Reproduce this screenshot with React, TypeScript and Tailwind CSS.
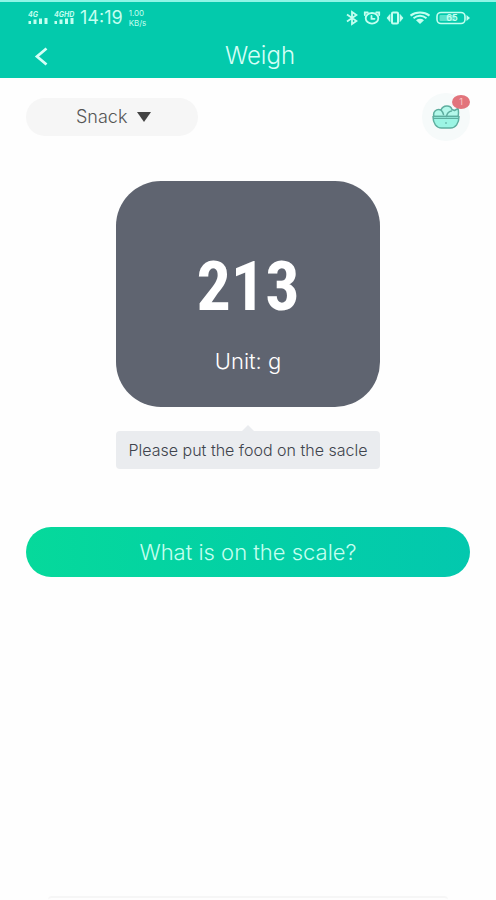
import { useState } from 'react';

function SignalIcon({ label }: { label: string }) {
  return (
    <svg width="22" height="16" viewBox="0 0 22 16" fill="currentColor" aria-label={`${label} signal`}>
      <text x="0" y="7" fontSize="7" fontWeight="700" fontStyle="italic" fontFamily="Inter, sans-serif">{label}</text>
      <rect x="0.500" y="11" width="2.500" height="3" />
      <rect x="5.500" y="9.500" width="3" height="4.500" />
      <rect x="11" y="8.500" width="3" height="5.500" />
      <rect x="16.500" y="8" width="3" height="6" />
    </svg>
  );
}

function BluetoothIcon() {
  return (
    <svg width="12" height="16" viewBox="0 0 12 16" fill="none" stroke="currentColor" strokeWidth="1.8">
      <path d="M1 4.500 10.500 11 6 14V2l4.500 3L1 11.500" />
    </svg>
  );
}

function AlarmIcon() {
  return (
    <svg width="18" height="16" viewBox="0 0 18 16" fill="none" stroke="currentColor" strokeWidth="1.8" strokeLinecap="round">
      <ellipse cx="9" cy="8.300" rx="6.300" ry="5.300" />
      <path d="M8.500 6v2.800h3M1.800 5V2.500h3M16.200 5V2.500h-3" />
    </svg>
  );
}

function VibrateIcon() {
  return (
    <svg width="18" height="16" viewBox="0 0 18 16" fill="none" stroke="currentColor" strokeWidth="2">
      <rect x="6" y="2.500" width="6" height="11" rx="1" />
      <path d="M4 4.500v7L1 8zM14 4.500v7L17 8z" fill="currentColor" strokeWidth="0.8" />
    </svg>
  );
}

function WifiIcon() {
  return (
    <svg width="22" height="16" viewBox="0 0 22 16" fill="none" stroke="currentColor" strokeWidth="2">
      <path d="M1.500 5.600C7 1.500 15 1.500 20.500 5.600M4.500 8.200c4-3 9-3 13 0" />
      <path d="M7 10.200c2.500-1.800 5.500-1.800 8 0L11 14z" fill="currentColor" stroke="none" />
    </svg>
  );
}

function BatteryIcon() {
  return (
    <svg width="34" height="16" viewBox="0 0 34 16" aria-label="Battery 65">
      <rect x="1" y="2.500" width="28" height="11" rx="4" fill="none" stroke="currentColor" strokeWidth="1.600" />
      <rect x="3.500" y="5" width="16" height="6" rx="1" fill="currentColor" opacity="0.45" />
      <path d="M30.500 5 34 8l-3.500 3z" fill="currentColor" />
      <text x="16" y="11.200" fontSize="9" fontWeight="600" fontFamily="Inter, sans-serif" textAnchor="middle" fill="currentColor">65</text>
    </svg>
  );
}

function BowlIcon() {
  return (
    <svg width="28" height="24" viewBox="0 0 28 24" stroke="#5eae9f" strokeWidth="1.500" strokeLinecap="round" strokeLinejoin="round">
      <path d="M2 11.500C.5 7 4 3.500 9 5c2-5 9.500-5.500 11-.5l2.500 1L26 3.500c.8 3 .6 5.500 0 8z" fill="#b4f8ea" />
      <path d="M1 11.500h26c0 7-3.500 11.500-8.500 11.500h-9C4.500 23 1 18.500 1 11.500z" fill="#9cf5e4" />
      <path d="M9 5c1 1 2 2.500 2.500 4.500M14.500 11.500c.5-3 2.500-5 5-5.500" fill="none" />
      <path d="M1.500 13.500h25" fill="none" strokeWidth="1" />
      <path d="M13.800 18h.4" />
    </svg>
  );
}

function StatusBar() {
  return (
    <div className="flex h-8 items-center justify-between px-[26px] text-[#c3fff0]">
      <div className="flex items-center gap-1 pl-0.5">
        <SignalIcon label="4G" />
        <SignalIcon label="4GHD" />
        <span className="text-lg">14:19</span>
        <div className="flex flex-col pl-0.5 text-[8px] leading-[10px]">
          <span>1.00</span>
          <span>KB/s</span>
        </div>
      </div>
      <div className="flex items-center gap-[5px]">
        <BluetoothIcon />
        <AlarmIcon />
        <VibrateIcon />
        <WifiIcon />
        <BatteryIcon />
      </div>
    </div>
  );
}

export default function App() {
  const [meal, setMeal] = useState('Snack');

  return (
    <div className="flex min-h-screen flex-col bg-[#fefefe] font-['Inter',sans-serif]">
      <header className="border-t-2 border-[#8ff5e6] bg-[#03caac]">
        <StatusBar />
        <div className="grid h-11 grid-cols-[1fr_auto_1fr] items-center px-8">
          <button type="button" aria-label="Back" className="w-fit text-[#d5fff7]">
            <svg width="18" height="20" viewBox="0 0 18 20" fill="none" stroke="currentColor" strokeWidth="2.800">
              <path d="M14.500 2.500 5 10.500l9.500 8" />
            </svg>
          </button>
          <h1 className="pl-6 text-2xl font-light text-[#d5fff7]">Weigh</h1>
        </div>
      </header>

      <main className="flex flex-col px-[26px]">
        <div className="flex h-[78px] items-center justify-between">
          <div className="grid h-[38px] w-[172px] items-center rounded-full bg-[#f6f6f6]">
            <select
              aria-label="Meal"
              value={meal}
              onChange={(e) => setMeal(e.target.value)}
              className="col-start-1 row-start-1 h-9 appearance-none rounded-full bg-transparent pl-[50px] text-lg font-light text-[#555]"
            >
              <option>Breakfast</option>
              <option>Lunch</option>
              <option>Dinner</option>
              <option>Snack</option>
            </select>
            <svg
              width="14"
              height="10"
              viewBox="0 0 14 10"
              className="pointer-events-none col-start-1 row-start-1 ml-[111px]"
              fill="#444"
            >
              <path d="M0 0h14L7 10z" />
            </svg>
          </div>
          <button type="button" aria-label="Food basket" className="relative flex size-12 items-center justify-center rounded-full bg-[#f6fafa]">
            <BowlIcon />
            <span className="absolute right-0 top-0.5 flex h-3.5 w-[18px] items-center justify-center rounded-[50%] bg-[#e2747c] text-[9px] text-[#fbc4c8]">
              1
            </span>
          </button>
        </div>

        <section className="mt-[25px] flex h-[226px] w-[264px] flex-col items-center self-center rounded-[45px] bg-[#5f6470] pt-[70px] text-white">
          <span className="font-['Roboto_Condensed','Roboto',sans-serif] text-[68px] font-bold leading-[72px]">213</span>
          <span className="mt-6 text-[22px] font-light leading-7">Unit: g</span>
        </section>

        <div className="mt-[18px] flex w-[264px] flex-col items-center self-center">
          <svg width="12" height="6" viewBox="0 0 12 6" fill="#eaecef">
            <path d="M6 0l6 6H0z" />
          </svg>
          <p className="flex h-[38px] w-full items-center justify-center rounded-sm bg-[#eaecef] text-base font-light whitespace-nowrap text-[#3f444d]">
            Please put the food on the sacle
          </p>
        </div>

        <button
          type="button"
          className="mt-[58px] h-[50px] rounded-full bg-linear-to-r from-[#06d99b] to-[#03c8ae] text-[22px] font-light text-[#c5fff0]"
        >
          What is on the scale?
        </button>
      </main>

      <footer className="mx-12 mt-auto h-1 rounded-t-full border-t-2 border-[#f6f6f6]" />
    </div>
  );
}
